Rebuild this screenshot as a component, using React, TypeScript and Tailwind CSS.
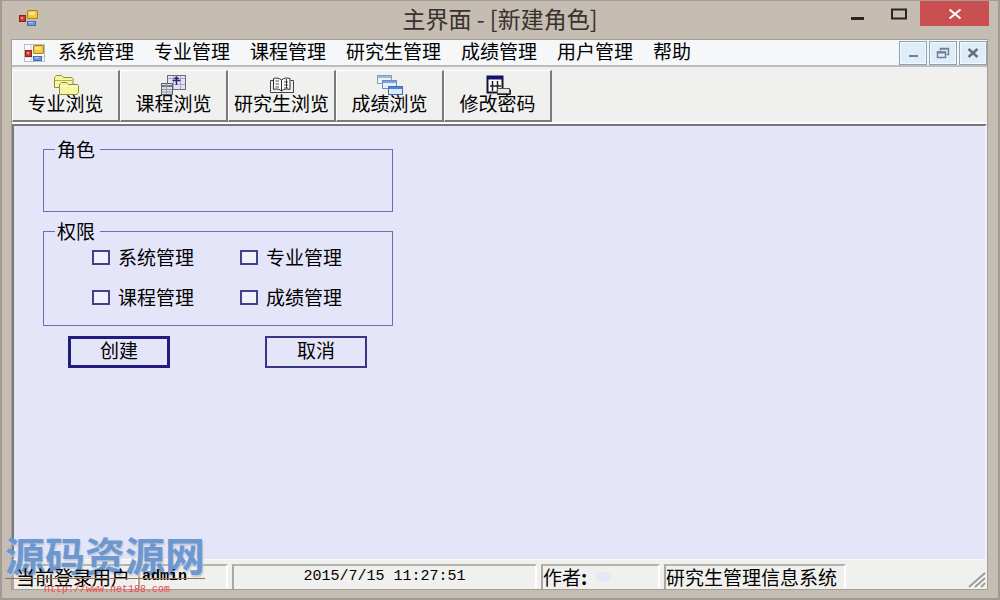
import React from 'react';

const menus = ['系统管理', '专业管理', '课程管理', '研究生管理', '成绩管理', '用户管理', '帮助'];
const permissions = ['系统管理', '专业管理', '课程管理', '成绩管理'];

function AppLogo({ framed = false }: { framed?: boolean }) {
  return (
    <svg width="21" height="18" viewBox="0 0 21 18" aria-hidden="true">
      {framed && (
        <>
          <rect x="0.5" y="0.5" width="20" height="17" fill="#fafafa" stroke="#b9bcc4" />
          <path d="M7 1v16M1 13h19" stroke="#c9ccd4" fill="none" />
        </>
      )}
      <rect x="9.5" y="1.5" width="10" height="8" rx="0.5" fill="#f3c53c" stroke="#a8841c" />
      <rect x="11" y="3" width="6" height="3" fill="#fde58a" />
      <rect x="1.5" y="6.5" width="6" height="6" fill="#cf3a30" stroke="#8c231f" />
      <rect x="3" y="8" width="2" height="2" fill="#f2a093" />
      <rect x="9.5" y="12.5" width="8" height="4" fill="#6f97e0" stroke="#4a6cb0" />
      <rect x="11" y="13" width="4" height="1" fill="#b7cdf6" />
    </svg>
  );
}

function FoldersIcon() {
  return (
    <svg width="26" height="22" viewBox="0 0 26 22" aria-hidden="true">
      <g stroke="#8f8b3c" fill="#f9f6a0">
        <path d="M1.500 13.500V3.500l2-2h5l2 2h8.500l1 1v9z" />
        <path d="M2 6.500h17" stroke="#b5b05a" />
        <path d="M6.500 20.500v-10l2-2h5l2 2h9l1 1v7l-1.500 2z" />
        <path d="M7 12.500h18" stroke="#fffde0" />
      </g>
    </svg>
  );
}

function CourseIcon() {
  return (
    <svg width="26" height="22" viewBox="0 0 26 22" aria-hidden="true">
      <rect x="6.500" y="1.500" width="18" height="14" fill="#e3e3f1" stroke="#6b6b7c" />
      <path d="M7 4.500h17M7 10.500h17M12.500 2v13M19.500 2v13" stroke="#a9a9bd" fill="none" />
      <path d="M11.500 6.500h8M15.500 3v8M13.500 5l2-2L17.500 5" stroke="#28287f" strokeWidth="1.500" fill="none" />
      <rect x="0.500" y="9.500" width="11" height="11" fill="#dedeea" stroke="#5f5f6c" />
      <path d="M1 12h10" stroke="#77778a" strokeWidth="2" />
      <path d="M1 15.500h10M1 18h10M5.500 10v10" stroke="#9797a5" fill="none" />
    </svg>
  );
}

function BookIcon() {
  return (
    <svg width="26" height="22" viewBox="0 0 26 22" aria-hidden="true">
      <path
        d="M12.500 6C10 4 7 3.500 4.500 4.500v11c3-1 6-.500 8 1.500 2-2 5-2.500 8.500-1.500v-11C18 3.500 15 4 12.500 6zv11"
        fill="#fbfbfb"
        stroke="#2d2d2d"
      />
      <path d="M4 6.500H1.500v12H24.500v-12H21.500" fill="none" stroke="#444" />
      <path d="M6.500 7h3.500M6.500 10h3.500M6.500 13h3.500M15 8h4M15 11h4M15 14h4" stroke="#555" fill="none" />
      <path d="M17.500 5v9" stroke="#333" />
    </svg>
  );
}

function CascadeIcon() {
  return (
    <svg width="26" height="22" viewBox="0 0 26 22" aria-hidden="true">
      <rect x="0.500" y="1.500" width="14" height="8" fill="#e9f1fb" stroke="#8c9cb5" />
      <path d="M1 3h13" stroke="#a3b7d5" strokeWidth="2" />
      <rect x="5.500" y="6.500" width="14" height="8" fill="#e4effc" stroke="#6f8cbc" />
      <path d="M6 8h13" stroke="#7ba0d9" strokeWidth="2" />
      <rect x="11.500" y="12.500" width="14" height="8" fill="#d5e9ff" stroke="#4c6ca6" />
      <path d="M12 14h13" stroke="#4f84d0" strokeWidth="2" />
    </svg>
  );
}

function PasswordIcon() {
  return (
    <svg width="26" height="22" viewBox="0 0 26 22" aria-hidden="true">
      <rect x="2.500" y="2.500" width="15" height="16" fill="#fff" stroke="#15152e" strokeWidth="2" />
      <path d="M2 4h16" stroke="#12127c" strokeWidth="3" />
      <path d="M7.500 7v10M12.500 7v10M5 12h11" stroke="#222" strokeWidth="1.500" />
      <rect x="12.500" y="14.500" width="12" height="5" fill="#e5e5e5" stroke="#555" />
      <path d="M12 20.500h13.500v-5" stroke="#222" fill="none" />
    </svg>
  );
}

const tools = [
  { label: '专业浏览', icon: <FoldersIcon /> },
  { label: '课程浏览', icon: <CourseIcon /> },
  { label: '研究生浏览', icon: <BookIcon /> },
  { label: '成绩浏览', icon: <CascadeIcon /> },
  { label: '修改密码', icon: <PasswordIcon /> },
];

function TitleBar() {
  return (
    <header className="grid h-[38px] shrink-0 grid-cols-[1fr_auto_1fr] items-start px-[9px]">
      <div className="pt-2 pl-[7px]">
        <AppLogo />
      </div>
      <h1 className="pt-[3px] text-[23px] leading-[28px] text-[#37322e]">主界面 - [新建角色]</h1>
      <div className="flex justify-end">
        <button aria-label="最小化" className="flex h-[25px] w-[42px] items-center justify-center">
          <svg width="16" height="16" viewBox="0 0 16 16">
            <rect x="2" y="11" width="13" height="3" fill="#2b2522" />
          </svg>
        </button>
        <button aria-label="最大化" className="flex h-[25px] w-[42px] items-center justify-center">
          <svg width="16" height="12" viewBox="0 0 16 12">
            <path d="M1 1.500h14v9H1z" fill="none" stroke="#2b2522" strokeWidth="2" />
          </svg>
        </button>
        <button aria-label="关闭" className="flex h-[25px] w-[69px] items-center justify-center bg-[#c94f50]">
          <svg width="14" height="12" viewBox="0 0 14 12">
            <path d="M1.500 1.500l11 9M12.500 1.500l-11 9" stroke="#fff" strokeWidth="2" />
          </svg>
        </button>
      </div>
    </header>
  );
}

const childButton =
  'flex h-6 w-[28px] items-center justify-center border border-[#8ca2b5] bg-[#dfedfa] shadow-[inset_0_0_0_1px_#f2f8fe]';

function MenuBar() {
  return (
    <nav className="flex h-[27px] shrink-0 items-center border-b-2 border-[#bdbdbd] bg-[#f5f7f9] pl-3">
      <AppLogo framed />
      <ul className="ml-[13px] flex gap-5 pb-[3px]">
        {menus.map((m) => (
          <li key={m}>
            <button className="block whitespace-nowrap leading-6">{m}</button>
          </li>
        ))}
      </ul>
      <div className="ml-auto flex gap-[2px]">
        <button aria-label="最小化子窗口" className={childButton}>
          <svg width="14" height="12" viewBox="0 0 14 12">
            <rect x="3" y="8" width="9" height="2" fill="#6f8395" />
          </svg>
        </button>
        <button aria-label="还原子窗口" className={childButton}>
          <svg width="14" height="12" viewBox="0 0 14 12">
            <path d="M4.500 3.500v-2h8v6h-2M4 2h9" fill="none" stroke="#6f8395" strokeWidth="1.500" />
            <path d="M1.500 5h8v5.500h-8z" fill="none" stroke="#6f8395" strokeWidth="1.500" />
            <path d="M1 5.500h9" stroke="#6f8395" strokeWidth="2" />
          </svg>
        </button>
        <button aria-label="关闭子窗口" className={childButton}>
          <svg width="14" height="12" viewBox="0 0 14 12">
            <path d="M2.500 2l9 8M11.500 2l-9 8" stroke="#64727f" strokeWidth="2.500" />
          </svg>
        </button>
      </div>
    </nav>
  );
}

function ToolBar() {
  return (
    <div className="flex h-[57px] shrink-0 border-b-2 border-white bg-[#f0f0ef] pt-[3px]" role="toolbar">
      {tools.map((t) => (
        <button
          key={t.label}
          className="flex h-[52px] w-[108px] flex-col items-center border-t border-r-2 border-b-2 border-l border-t-white border-r-[#7b7b7b] border-b-[#7b7b7b] border-l-white pt-[3px] whitespace-nowrap"
        >
          {t.icon}
          <span className="-mt-[5px] block leading-6">{t.label}</span>
        </button>
      ))}
    </div>
  );
}

const fieldsetBase = 'border border-[#7468b8]';
const legendBase = 'pr-[5px] pl-[2px] leading-5';

function RoleForm() {
  return (
    <main className="grow border-t-2 border-r-2 border-l-2 border-[#77777d] border-r-[#f2f2f6] bg-[#e5e5fa] pt-[13px] pl-[29px]">
      <form className="w-[350px]" onSubmit={(e) => e.preventDefault()}>
        <fieldset className={`${fieldsetBase} h-[73px]`}>
          <legend className={`${legendBase} ml-[11px]`}>角色</legend>
        </fieldset>
        <fieldset className={`${fieldsetBase} mt-[9px] h-[105px]`}>
          <legend className={`${legendBase} ml-[11px]`}>权限</legend>
          <div className="grid grid-cols-[148px_1fr] gap-y-4 pt-1 pl-12">
            {permissions.map((p) => (
              <label key={p} className="flex items-center gap-2 leading-6 whitespace-nowrap">
                <input
                  type="checkbox"
                  className="h-[15px] w-[18px] shrink-0 appearance-none border-2 border-[#44408c] bg-[#f0f0fe] checked:bg-[#44408c]"
                />
                {p}
              </label>
            ))}
          </div>
        </fieldset>
        <div className="flex gap-[95px] pt-[10px] pl-[25px]">
          <button type="submit" className="flex h-8 w-[102px] items-center justify-center border-3 border-[#221c7c] pb-1 leading-6">
            创建
          </button>
          <button type="button" className="flex h-8 w-[102px] items-center justify-center border-2 border-[#3a3583] pb-1 leading-6">
            取消
          </button>
        </div>
      </form>
    </main>
  );
}

function StatusBar() {
  const cell =
    'flex h-[25px] items-center border-t-2 border-r-2 border-l-2 border-t-[#b4b4af] border-r-white border-l-[#a8a8a4] pb-[2px] leading-5 whitespace-nowrap';
  return (
    <footer className="flex h-[30px] shrink-0 items-end gap-1 border-t border-[#f8f8f4] bg-[#f0f0ee]">
      <div className="flex w-[216px]">
        <div className={`${cell} w-[126px] border-r-0 border-l-0 pl-[2px]`}>
          <span className="relative z-10">当前登录用户</span>
        </div>
        <div className={`${cell} grow pl-[2px]`}>
          <span className="relative z-10 text-[15px] font-bold [font-family:'Liberation_Mono',monospace]">admin</span>
        </div>
      </div>
      <div className={`${cell} w-[305px] justify-center`}>
        <time className="text-[15px] whitespace-pre [font-family:'Liberation_Mono',monospace]">2015/7/15 11:27:51</time>
      </div>
      <div className={`${cell} w-[119px]`}>
        作者<b>:</b>
        <span className="ml-2 h-[10px] w-4 rounded-full bg-[#e7e7fa]" />
      </div>
      <div className={`${cell} w-[182px]`}>研究生管理信息系统</div>
      <svg className="ml-auto" width="20" height="18" viewBox="0 0 20 18" aria-hidden="true">
        <path d="M2 16L18 2M8 16l10-9M14 16l4-4" stroke="#9b9b9b" strokeWidth="2" />
        <path d="M4 17L19 4M10 17l9-8" stroke="#fff" />
      </svg>
    </footer>
  );
}

function SiteMark() {
  return (
    <div className="pointer-events-none absolute bottom-0 left-[3px] flex w-[200px] flex-col">
      <span className="text-[40px] leading-[48px] font-bold whitespace-nowrap text-[#6b98d0] [text-shadow:1px_2px_2px_#c4c6d4]">
        源码资源网
      </span>
      <span className="relative z-20 border-t border-[#a0704a] pt-[3px] pl-[39px] text-[10px] leading-[16px] text-[#f04a4a] [font-family:'Liberation_Mono',monospace]">
        http://www.net188.com
      </span>
    </div>
  );
}

export default function App() {
  return (
    <div className="relative flex min-h-screen flex-col border-2 border-t-1 border-[#a29b93] bg-[#c5bcb2] text-[19px] text-black [font-family:'Noto_Sans_CJK_SC',sans-serif]">
      <TitleBar />
      <div className="mr-[10px] mb-2 ml-[9px] flex grow flex-col border border-[#a59e97] bg-[#f0f0ee]">
        <MenuBar />
        <ToolBar />
        <RoleForm />
        <StatusBar />
      </div>
      <SiteMark />
    </div>
  );
}
